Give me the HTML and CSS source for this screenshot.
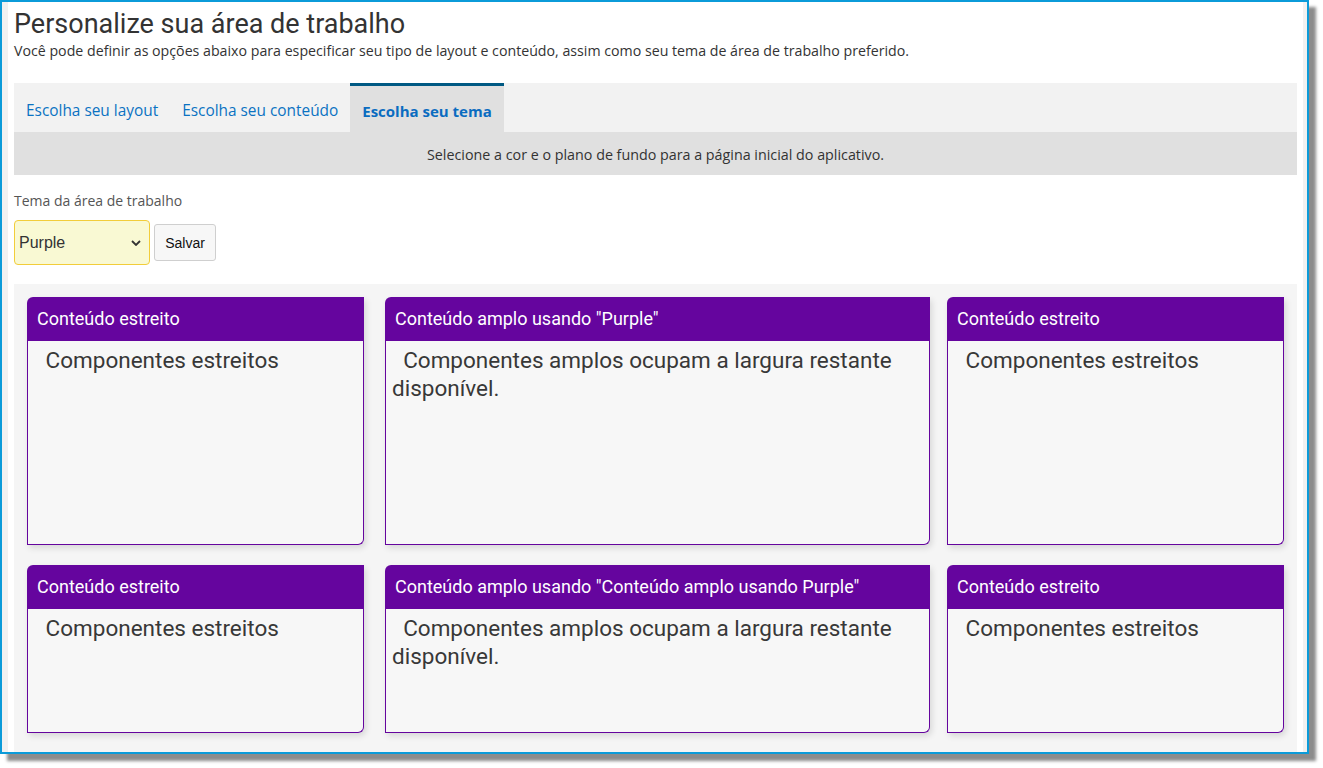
FILE: index.html
```html
<!DOCTYPE html>
<html lang="pt-BR">
<head>
<meta charset="utf-8">
<title>Personalize sua área de trabalho</title>
<link rel="stylesheet" href="styles.css">
</head>
<body>
<div class="frame">
  <div class="page">
    <h1 class="title">Personalize sua área de trabalho</h1>
    <p class="subtitle">Você pode definir as opções abaixo para especificar seu tipo de layout e conteúdo, assim como seu tema de área de trabalho preferido.</p>
    <div class="tabs">
      <div class="tab">Escolha seu layout</div>
      <div class="tab">Escolha seu conteúdo</div>
      <div class="tab active">Escolha seu tema</div>
    </div>
    <div class="info">Selecione a cor e o plano de fundo para a página inicial do aplicativo.</div>
    <div class="form">
      <label class="label">Tema da área de trabalho</label>
      <div class="controls">
        <div class="select">
          <span>Purple</span>
          <svg class="chev" width="10" height="6" viewBox="0 0 10 6"><path d="M1 1 L5 5 L9 1" fill="none" stroke="#333" stroke-width="1.8"/></svg>
        </div>
        <button class="btn">Salvar</button>
      </div>
    </div>
    <div class="cards">
      <div class="card narrow">
        <div class="card-head">Conteúdo estreito</div>
        <div class="card-body">&nbsp;Componentes estreitos</div>
      </div>
      <div class="card wide">
        <div class="card-head">Conteúdo amplo usando "Purple"</div>
        <div class="card-body">&nbsp;&nbsp;Componentes amplos ocupam a largura restante disponível.</div>
      </div>
      <div class="card narrow">
        <div class="card-head">Conteúdo estreito</div>
        <div class="card-body">&nbsp;Componentes estreitos</div>
      </div>
      <div class="card narrow">
        <div class="card-head">Conteúdo estreito</div>
        <div class="card-body">&nbsp;Componentes estreitos</div>
      </div>
      <div class="card wide">
        <div class="card-head">Conteúdo amplo usando "Conteúdo amplo usando Purple"</div>
        <div class="card-body">&nbsp;&nbsp;Componentes amplos ocupam a largura restante disponível.</div>
      </div>
      <div class="card narrow">
        <div class="card-head">Conteúdo estreito</div>
        <div class="card-body">&nbsp;Componentes estreitos</div>
      </div>
    </div>
  </div>
</div>
</body>
</html>
```

FILE: styles.css
```css
* { box-sizing: border-box; }
html, body { margin: 0; padding: 0; background: #fff; }
body { width: 1323px; height: 768px; overflow: hidden; font-family: "Open Sans", "Noto Sans", sans-serif; }

.frame {
  width: 1309px;
  height: 754px;
  border: 2px solid #0b9bd9;
  background: #f1f1f1;
  padding: 0 4px 0 6px;
  box-shadow: 7px 7px 3px rgba(0,0,0,0.45);
}
.page {
  background: #fff;
  height: 100%;
  padding: 0 6px;
  display: flex;
  flex-direction: column;
}
.title {
  margin: 0;
  padding-top: 5px;
  font-family: Roboto, "Liberation Sans", sans-serif;
  font-weight: 400;
  font-size: 27px;
  line-height: 34px;
  color: #333;
}
.subtitle {
  margin: 0;
  font-size: 14.2px;
  line-height: 20px;
  color: #333;
}
.tabs {
  margin-top: 22px;
  height: 49px;
  background: #f2f2f2;
  display: flex;
}
.tab {
  padding: 0 12px;
  height: 49px;
  font-size: 15.4px;
  color: #0b72c2;
  border-top: 3px solid transparent;
  line-height: 50px;
}
.tab.active {
  background: #e0e0e0;
  border-top-color: #005983;
  font-weight: 700;
  font-size: 15px;
  color: #0a6cc0;
}
.info {
  height: 43px;
  background: #e0e0e0;
  text-align: center;
  font-size: 14.3px;
  line-height: 46px;
  color: #333;
}
.form {
  padding-top: 17px;
}
.label {
  display: block;
  font-size: 14px;
  line-height: 18px;
  color: #555;
}
.controls {
  margin-top: 10px;
  display: flex;
  align-items: center;
  gap: 4px;
}
.select {
  width: 136px;
  height: 45px;
  background: #f9f9d3;
  border: 1px solid #f2cd3a;
  border-radius: 4px;
  display: flex;
  align-items: center;
  justify-content: space-between;
  padding: 0 8px 0 4px;
  font-family: "Liberation Sans", Arial, sans-serif;
  font-size: 16px;
  color: #333;
}
.chev { display: block; }
.btn {
  width: 62px;
  height: 37px;
  background: #f7f7f7;
  border: 1px solid #cfcfcf;
  border-radius: 3px;
  font-family: "Liberation Sans", Arial, sans-serif;
  font-size: 14px;
  color: #111;
  padding: 0;
}
.cards {
  margin-top: 19px;
  flex: 1;
  background: #f5f5f5;
  padding: 13px 12px 0 13px;
  display: grid;
  grid-template-columns: 337px 583px 337px;
  grid-template-rows: 248px 168px;
  row-gap: 20px;
  justify-content: start;
}
.card {
  display: flex;
  flex-direction: column;
  box-shadow: 2px 3px 6px rgba(0,0,0,0.12);
  border-radius: 6px 0 6px 0;
}
.card.wide { margin: 0 17px 0 21px; }
.card-head {
  height: 44px;
  background: #65059e;
  color: #fff;
  font-family: Roboto, "Liberation Sans", sans-serif;
  font-size: 18px;
  line-height: 44px;
  padding-left: 10px;
  border-radius: 6px 0 0 0;
  white-space: nowrap;
}
.card-body {
  flex: 1;
  background: #f7f7f7;
  border: 1px solid #65059e;
  border-top: none;
  border-radius: 0 0 6px 0;
  font-family: Roboto, "Liberation Sans", sans-serif;
  font-size: 22.5px;
  line-height: 28px;
  color: #383838;
  padding: 5px 6px 0 6px;
}
.narrow .card-body { padding-left: 12px; }
```
